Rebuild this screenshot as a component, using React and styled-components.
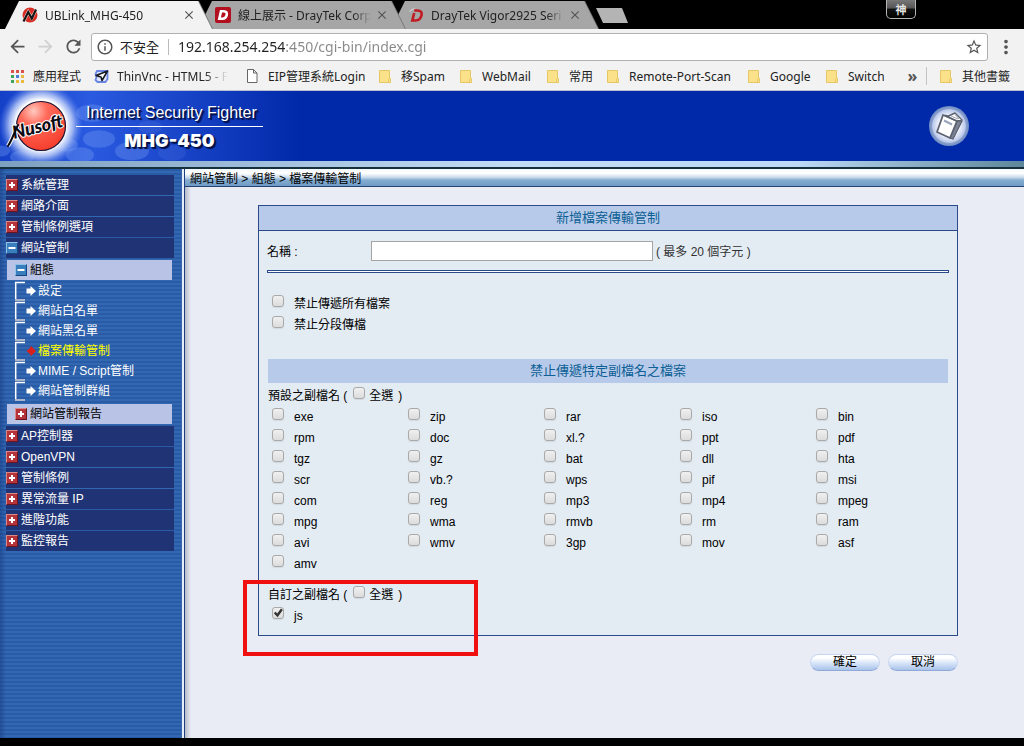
import React, { useState } from 'react';
import styled, { createGlobalStyle, css } from 'styled-components';
import {
  MdArrowBack,
  MdArrowForward,
  MdRefresh,
  MdStarBorder,
  MdMoreVert,
  MdInfoOutline,
  MdClose,
} from 'react-icons/md';

const uiFont = '"Noto Sans", "Noto Sans CJK TC", sans-serif';
const pageFont = '"Liberation Sans", "Noto Sans CJK TC", sans-serif';

const GlobalStyle = createGlobalStyle`
  *, *::before, *::after { box-sizing: border-box; }
  body { margin: 0; background: #000; font-family: ${pageFont}; font-size: 12px; }
  button, input { font: inherit; margin: 0; }
  a { color: inherit; text-decoration: none; }
  svg { display: block; flex: none; }
`;

const Screen = styled.div`
  display: flex;
  flex-direction: column;
  min-height: 100vh;
`;

/* ---------- Browser frame ---------- */

const TabStrip = styled.div`
  display: flex;
  align-items: flex-end;
  height: 29px;
  padding: 0 108px 0 5px;
  background: #000;
  font-family: ${uiFont};
`;

const TabSlot = styled.div`
  position: relative;
  z-index: ${(p) => p.$level};
  width: 207px;
  margin-right: -14px;
  filter: drop-shadow(1px 0 0 #777);
`;

const Tab = styled.div`
  display: flex;
  align-items: center;
  height: 28px;
  padding: 0 16px 0 17px;
  background: ${(p) => (p.$active ? '#f2f2f2' : '#a6a6a6')};
  clip-path: polygon(14px 0, calc(100% - 14px) 0, 100% 100%, 0 100%);
`;

const TabTitle = styled.span`
  flex: 1;
  min-width: 0;
  margin-left: 7px;
  overflow: hidden;
  white-space: nowrap;
  font-size: 12px;
  color: #222;
  mask-image: linear-gradient(90deg, #000 calc(100% - 18px), transparent);
`;

const PlainButton = styled.button`
  display: flex;
  align-items: center;
  justify-content: center;
  padding: 0;
  border: 0;
  background: none;
  color: ${(p) => p.$color || '#555'};
`;

const TabClose = styled(PlainButton)`
  width: 14px;
  margin-left: 4px;
`;

const NewTab = styled.button`
  width: 32px;
  height: 15px;
  margin: 0 0 6px 12px;
  padding: 0;
  border: 0;
  background: #b4b4b4;
  clip-path: polygon(0 0, 26px 0, 100% 100%, 7px 100%);
`;

const ImeBadge = styled.span`
  align-self: flex-start;
  width: 30px;
  height: 19px;
  margin-left: auto;
  border: 1px solid #b5b5b5;
  border-top: 0;
  border-radius: 0 0 5px 5px;
  background: linear-gradient(#777 0, #555 45%, #111 50%, #000);
  color: #e4e4e4;
  font-size: 11px;
  font-weight: 700;
  line-height: 19px;
  text-align: center;
`;

const Toolbar = styled.div`
  display: flex;
  align-items: center;
  gap: 7px;
  height: 35px;
  padding: 0 7px;
  background: #f2f2f2;
  font-family: ${uiFont};
`;

const Omnibox = styled.label`
  display: flex;
  flex: 1;
  align-items: center;
  height: 28px;
  padding: 0 4px;
  border: 1px solid #b0b0b0;
  border-radius: 3px;
  background: #fff;
  color: #222;
  font-size: 13px;
`;

const Security = styled.span`
  margin: 0 9px 0 6px;
  padding-right: 9px;
  border-right: 1px solid #bbb;
  line-height: 16px;
  white-space: nowrap;
`;

const Address = styled.input`
  flex: 1;
  min-width: 0;
  padding: 0;
  border: 0;
  outline: 0;
  background: linear-gradient(90deg, #222 107px, #888 107px);
  background-clip: text;
  -webkit-text-fill-color: transparent;
  font-size: 14px;
  line-height: 20px;
`;

const Bookmarks = styled.nav`
  display: flex;
  align-items: center;
  height: 27px;
  padding: 0 10px 2px;
  border-bottom: 1px solid #b8bfd0;
  background: #f2f2f2;
  font-family: ${uiFont};
  font-size: 12px;
  color: #222;
`;

const Bookmark = styled.a`
  display: flex;
  align-items: center;
  width: ${(p) => p.$width}px;
  padding-right: 12px;
  gap: 8px;
  white-space: nowrap;
  svg { width: 15px; height: 15px; }
`;

const BookmarkName = styled.span`
  overflow: hidden;
  ${(p) => p.$fade && css`mask-image: linear-gradient(90deg, #000 calc(100% - 24px), transparent);`}
`;

const OtherBookmarks = styled.div`
  display: flex;
  align-items: center;
  margin-left: auto;
  padding-left: 12px;
  border-left: 1px solid #c4c4c4;
`;

const More = styled(PlainButton)`
  margin-left: auto;
  font-size: 16px;
  font-weight: 700;
  line-height: 16px;
`;

/* ---------- Product header ---------- */

const Header = styled.header`
  position: relative;
  display: flex;
  align-items: center;
  justify-content: space-between;
  height: 70px;
  padding-right: 55px;
  background: #0029a9;
`;

const HeaderArt = styled.svg`
  width: 300px;
  height: 70px;
`;

const Brand = styled.div`
  position: absolute;
  top: 12px;
  left: 76px;
  width: 187px;
  color: #fff;
  text-shadow: 1px 1px 1px #001048, 2px 2px 1px #001048;
`;

const BrandLine = styled.div`
  padding: 0 0 3px 10px;
  border-bottom: 1px solid #fff;
  font-size: 16px;
  line-height: 20px;
  white-space: nowrap;
`;

const Model = styled.div`
  padding-top: 4px;
  text-align: center;
  font-family: Inter, sans-serif;
  font-size: 18px;
  font-weight: 900;
  line-height: 20px;
`;

const Ridge = styled.div`
  height: 8px;
  border-bottom: 2px solid #15303c;
  background: linear-gradient(90deg, #7d9fc0, #c3dcf5 50%, #bcd9f6 78%, #5c8699);
`;

const Body = styled.div`
  display: flex;
  flex: 1;
`;

/* ---------- Side menu ---------- */

const Side = styled.nav`
  flex: none;
  width: 185px;
  padding: 6px 8px 0 6px;
  border-right: 1px solid #1c3f80;
  background:
    linear-gradient(90deg, transparent 181px, #3a64a6 181px, #3a64a6 182px, #e6eefb 182px),
    linear-gradient(90deg, rgba(10, 40, 110, 0.35), transparent 6px),
    repeating-linear-gradient(#2a5ba6 0, #2a5ba6 2px, #3267b1 2px, #3267b1 4px);
  color: #fff;
`;

const MenuItem = styled.a`
  display: flex;
  align-items: center;
  gap: 3px;
  width: 168px;
  height: 20px;
  margin-bottom: 1px;
  background: #203475;
  line-height: 20px;
`;

const SubHead = styled(MenuItem)`
  width: 165px;
  margin: ${(p) => (p.$last ? '3px 0 2px 1px' : '2px 0 1px 1px')};
  padding-left: 8px;
  background: #b9c3e6;
  color: #000;
`;

const SubItem = styled.a`
  display: flex;
  align-items: center;
  gap: 2px;
  height: 20px;
  padding-left: 8px;
  color: ${(p) => (p.$active ? '#ffff00' : '#fff')};
  line-height: 20px;
`;

/* ---------- Page ---------- */

const Main = styled.main`
  flex: 1;
  min-width: 0;
  padding-bottom: 60px;
  background: linear-gradient(90deg, #b4b9c8, #e9ecf5 6px);
`;

const Crumbs = styled.div`
  height: 18px;
  padding-left: 5px;
  border-bottom: 1px solid #24426e;
  background: linear-gradient(#f4f8fc 0, #fff 25%, #c6d9ea 50%, #85acd0 65%, #6f9cc6);
  color: #000;
  line-height: 20px;
  white-space: nowrap;
`;

const Form = styled.form`
  margin: 18px 66px 0 73px;
`;

const Panel = styled.section`
  position: relative;
  padding-bottom: 8px;
  border: 1px solid #2a4a8c;
  background: #e3ebf3;
  color: #000;
`;

const PanelTitle = styled.h1`
  margin: 0;
  border-bottom: 1px solid #2a4a8c;
  background: #b8caea;
  color: #0b5f94;
  font-size: 13px;
  font-weight: 400;
  line-height: 24px;
  text-align: center;
`;

const NameRow = styled.div`
  display: flex;
  align-items: center;
  height: 39px;
  margin: 0 8px;
  color: #333;
`;

const NameLabel = styled.label`
  width: 104px;
  color: #000;
`;

const NameInput = styled.input`
  width: 282px;
  height: 20px;
  margin-right: 3px;
  padding: 0 4px;
  border: 1px solid #a4a4a4;
  background: #fff;
`;

const Rule = styled.hr`
  height: 3px;
  margin: 0 8px 21px;
  border: 1px solid #2a4a8c;
  background: #fff;
`;

const Check = styled.input.attrs({ type: 'checkbox' })`
  position: relative;
  flex: none;
  appearance: none;
  width: 12px;
  height: 12px;
  border: 1px solid #a9a9a9;
  border-radius: 3px;
  background: linear-gradient(#f0f0f0, #dcdcdc);
  box-shadow: 0 1px 1px rgba(0, 0, 0, 0.08);
  &:checked::after {
    content: '';
    position: absolute;
    inset: 0;
    background: #333;
    clip-path: polygon(8% 52%, 26% 38%, 42% 56%, 80% 6%, 98% 20%, 46% 92%);
  }
`;

const Option = styled.label`
  display: flex;
  align-items: flex-start;
  gap: 10px;
  height: 21px;
  padding: 1px 0 0 13px;
  line-height: 18px;
`;

const Band = styled.h2`
  margin: 23px 9px 3px;
  background: #b8caea;
  color: #0b5f94;
  font-size: 13px;
  font-weight: 400;
  line-height: 24px;
  text-align: center;
`;

const GroupHead = styled.div`
  display: flex;
  align-items: flex-start;
  height: 21px;
  padding-left: 9px;
  line-height: 20px;
`;

const SelectAll = styled.label`
  display: flex;
  gap: 4px;
  margin: 0 5px 0 6px;
  ${Check} { margin-top: 1px; }
`;

const Extensions = styled.div`
  display: grid;
  grid-template-columns: repeat(5, 1fr);
  padding-right: 18px;
  margin-bottom: 10px;
  ${Option} { line-height: 18px; }
`;

const Highlight = styled.div`
  position: absolute;
  top: 374px;
  left: -16px;
  width: 235px;
  height: 76px;
  border: 4px solid #f01010;
  pointer-events: none;
`;

const Actions = styled.div`
  display: flex;
  justify-content: flex-end;
  gap: 8px;
  margin-top: 18px;
`;

const Action = styled.button`
  width: 70px;
  height: 17px;
  padding: 0;
  border: 1px solid #c6d6ef;
  border-bottom-color: #8faad8;
  border-radius: 9px;
  background: linear-gradient(#fff 20%, #dbe8fa 50%, #a9c3ea);
  color: #000;
  line-height: 15px;
`;

const BottomBar = styled.div`
  height: 8px;
  background: #000;
`;

/* ---------- Drawings ---------- */

const NusoftFavicon = () => (
  <svg width="16" height="16" viewBox="0 0 16 16">
    <circle cx="8" cy="8" r="7.5" fill="#d92c22" />
    <path d="M2 13.500 6.200 5l3.600 6L14 3" fill="none" stroke="#f6d5d0" strokeWidth="3.200" />
    <path d="M1.500 14.500 6.200 5l3.600 6.500L14 2.500" fill="none" stroke="#151515" strokeWidth="2.200" />
  </svg>
);

const DraytekFavicon = ({ boxed }) => (
  <svg width="16" height="16" viewBox="0 0 16 16">
    {boxed && <rect width="16" height="16" rx="2" fill="#b3101f" />}
    <path
      d={boxed ? 'M6 4.200h2.800c2.600 0 3.400 1.400 2.900 3.900-.5 2.600-1.800 3.700-4.200 3.700H4.300z' : 'M6.200 3.500h3c3.600 0 5 1.600 4.300 4.800-.8 3.600-2.800 5.200-6 5.200H4.300L6.200 6'}
      fill="none"
      stroke={boxed ? '#fff' : '#c01a22'}
      strokeWidth="2.600"
    />
    {!boxed && <path d="M1 5.500C2 2.600 5 1 8 1.600 5.500 2 3.500 3 1 5.500z" fill="#e9e3e3" />}
  </svg>
);

const AppsIcon = () => (
  <svg viewBox="0 0 15 15">
    {['#d9534a', '#d9534a', '#d9534a', '#3fa35a', '#4a7fd6', '#e8b93c', '#3fa35a', '#e8b93c', '#e8b93c'].map((c, i) => (
      <rect key={i} x={1 + (i % 3) * 5} y={1 + Math.floor(i / 3) * 5} width="3" height="3" fill={c} />
    ))}
  </svg>
);

const ThinVncIcon = () => (
  <svg viewBox="0 0 15 15">
    <path d="M4 2h9.500v8l-2 3H3.500l-2-2 1-3-1-3 1.500-3z" fill="#dfe5fb" stroke="#6a86e4" strokeWidth="1.800" />
    <path d="M2 6.500 13.500 2 8 11.500 7 8z" fill="#fff" stroke="#16181f" strokeWidth="1.500" strokeLinejoin="round" />
  </svg>
);

const FileIcon = () => (
  <svg viewBox="0 0 15 15">
    <path d="M2.500.5h6l3.500 3.500v9.500H2.500zM8.500.5V4H12" fill="#fff" stroke="#666" />
  </svg>
);

const FolderIcon = () => (
  <svg viewBox="0 0 15 15">
    <path d="M1.500 1.500h10v8h1v4h-11z" fill="#fbe28a" stroke="#e5c765" />
    <path d="M10.500 13v-3" stroke="#e5c765" />
  </svg>
);

const ToggleIcon = ({ open }) => (
  <svg width="12" height="12" viewBox="0 0 12 12">
    <rect width="12" height="12" fill={open ? '#17467f' : '#6b1420'} />
    <path d="M0 12V0h12l-1.500 1.500h-9v9z" fill={open ? '#8fc0e6' : '#d98a88'} />
    <rect x="1" y="1" width="10" height="10" fill={open ? '#3a7fbd' : '#b5343a'} />
    <path d={open ? 'M2.500 6h7' : 'M3 6h6M6 3v6'} stroke="#fff" strokeWidth="2" />
  </svg>
);

const BranchArrow = ({ active }) => (
  <svg width="22" height="20" viewBox="0 0 22 20">
    <path d="M11 1.500H1.700v17" fill="none" stroke="#fff" strokeWidth="1.500" />
    <path d="M1 19H11" stroke="#a9b6cc" strokeWidth="2" />
    <path
      d={active ? 'M12.500 10l3-2.500 1.500-2.500 5 5-5 5-1.500-2.500z' : 'M12.500 7.500h4V5l5.500 5-5.500 5v-2.500h-4z'}
      fill={active ? '#d8201c' : '#fff'}
    />
  </svg>
);

const BookIcon = () => (
  <svg width="40" height="40" viewBox="0 0 40 40">
    <defs>
      <radialGradient id="disc">
        <stop offset="0.500" stopColor="#f4f6fd" />
        <stop offset="0.820" stopColor="#b9c8ea" />
        <stop offset="0.860" stopColor="#8ba0cc" />
        <stop offset="1" stopColor="#6f8cc4" />
      </radialGradient>
    </defs>
    <circle cx="20" cy="20" r="20" fill="url(#disc)" />
    <path d="M28 15 33 15 24 33 21 32z" fill="#7c8496" stroke="#5c6270" strokeWidth="1.200" />
    <path d="M14 9 28 15 21 32 8 26z" fill="#fff" stroke="#5c6270" strokeWidth="1.800" strokeLinejoin="round" />
    <path d="M16 9.500 19.500 10 26 7 33 14 28 15z" fill="#fff" stroke="#5c6270" strokeWidth="1.400" strokeLinejoin="round" />
    <path d="M22 10 29 13M26 8.500 30 13" stroke="#8a91a2" strokeWidth="0.800" />
    <path d="M15 14.500 23 18.500" stroke="#9aa3bb" strokeWidth="2" />
  </svg>
);

const bubbles = [
  [99, 48, 16], [80, 64, 14], [132, 60, 17], [92, 22, 16], [22, 66, 12], [172, 62, 14], [66, 54, 12], [0, 60, 10], [150, 36, 12],
];

const Art = () => (
  <HeaderArt viewBox="0 0 300 70">
    <defs>
      <linearGradient id="sky">
        <stop offset="0" stopColor="#1440c8" />
        <stop offset="0.300" stopColor="#2a5ae0" />
        <stop offset="0.550" stopColor="#1c48cc" />
        <stop offset="1" stopColor="#0029a9" />
      </linearGradient>
      <radialGradient id="halo">
        <stop offset="0.600" stopColor="#fff" />
        <stop offset="0.760" stopColor="#bccdf8" stopOpacity="0.800" />
        <stop offset="1" stopColor="#5c86ee" stopOpacity="0" />
      </radialGradient>
      <radialGradient id="ball" cx="0.350" cy="0.200" r="0.800">
        <stop offset="0" stopColor="#ffc9bf" />
        <stop offset="0.350" stopColor="#ff6a5a" />
        <stop offset="1" stopColor="#f6402f" />
      </radialGradient>
    </defs>
    <rect width="300" height="70" fill="url(#sky)" />
    {bubbles.map(([x, y, r], i) => (
      <ellipse key={i} cx={x} cy={y} rx={r} ry={r * 0.550} fill="#86a8fa" opacity={x > 145 ? 0.120 : 0.300} />
    ))}
    <circle cx="41" cy="34" r="42" fill="url(#halo)" />
    <circle cx="41" cy="35" r="24.500" fill="url(#ball)" stroke="#1b1030" strokeWidth="1.200" />
    <path d="M8 55C12 49 14 42 18 34" fill="none" stroke="#fff" strokeWidth="4" />
    <text
      x="14" y="48" transform="rotate(-14 14 48)"
      fontFamily="Lato, sans-serif" fontStyle="italic" fontWeight="900" fontSize="18"
      fill="#0a0a14" stroke="#fff" strokeWidth="2" paintOrder="stroke"
    >
      Nusoft
    </text>
    <path d="M8 55C12 49 14 42 18 34" fill="none" stroke="#0a0a14" strokeWidth="2" strokeLinecap="round" />
  </HeaderArt>
);

/* ---------- Data ---------- */

const tabs = [
  { title: 'UBLink_MHG-450', icon: <NusoftFavicon />, active: true },
  { title: '線上展示 - DrayTek Corp', icon: <DraytekFavicon boxed /> },
  { title: 'DrayTek Vigor2925 Seri', icon: <DraytekFavicon /> },
];

const bookmarks = [
  ['應用程式', 84, AppsIcon],
  ['ThinVnc - HTML5 - F', 151, ThinVncIcon],
  ['EIP管理系統Login', 133, FileIcon],
  ['移Spam', 81, FolderIcon],
  ['WebMail', 87, FolderIcon],
  ['常用', 60, FolderIcon],
  ['Remote-Port-Scan', 141, FolderIcon],
  ['Google', 78, FolderIcon],
  ['Switch', 74, FolderIcon],
];

const menuTop = ['系統管理', '網路介面', '管制條例選項'];
const subMenu = ['設定', '網站白名單', '網站黑名單', '檔案傳輸管制', 'MIME / Script管制', '網站管制群組'];
const menuBottom = ['AP控制器', 'OpenVPN', '管制條例', '異常流量 IP', '進階功能', '監控報告'];

const extensions = (
  'exe zip rar iso bin rpm doc xl.? ppt pdf tgz gz bat dll hta scr vb.? wps pif msi ' +
  'com reg mp3 mp4 mpeg mpg wma rmvb rm ram avi wmv 3gp mov asf amv'
).split(' ');

export default function App() {
  const [name, setName] = useState('');
  const [url, setUrl] = useState('192.168.254.254:450/cgi-bin/index.cgi');

  return (
    <Screen>
      <GlobalStyle />
      <TabStrip>
        {tabs.map((t, i) => (
          <TabSlot key={t.title} $level={3 - i}>
            <Tab $active={t.active}>
              {t.icon}
              <TabTitle>{t.title}</TabTitle>
              <TabClose type="button" aria-label="關閉"><MdClose size={14} /></TabClose>
            </Tab>
          </TabSlot>
        ))}
        <NewTab type="button" aria-label="新分頁" />
        <ImeBadge>神</ImeBadge>
      </TabStrip>

      <Toolbar>
        <PlainButton type="button" aria-label="上一頁"><MdArrowBack size={21} /></PlainButton>
        <PlainButton type="button" aria-label="下一頁" $color="#d0d0d0"><MdArrowForward size={21} /></PlainButton>
        <PlainButton type="button" aria-label="重新載入"><MdRefresh size={21} /></PlainButton>
        <Omnibox>
          <MdInfoOutline size={18} color="#555" />
          <Security>不安全</Security>
          <Address aria-label="網址" value={url} onChange={(e) => setUrl(e.target.value)} />
          <MdStarBorder size={18} color="#555" />
        </Omnibox>
        <PlainButton type="button" aria-label="選單"><MdMoreVert size={22} /></PlainButton>
      </Toolbar>

      <Bookmarks>
        {bookmarks.map(([label, width, Icon], i) => (
          <Bookmark key={label} href="#" $width={width}>
            <Icon />
            <BookmarkName $fade={i === 1}>{label}</BookmarkName>
          </Bookmark>
        ))}
        <More type="button">»</More>
        <OtherBookmarks>
          <Bookmark href="#" $width={75}>
            <FolderIcon />
            <span>其他書籤</span>
          </Bookmark>
        </OtherBookmarks>
      </Bookmarks>

      <Header>
        <Art />
        <Brand>
          <BrandLine>Internet Security Fighter</BrandLine>
          <Model>MHG-450</Model>
        </Brand>
        <PlainButton type="button" aria-label="說明"><BookIcon /></PlainButton>
      </Header>
      <Ridge />

      <Body>
        <Side>
          {menuTop.map((m) => (
            <MenuItem key={m} href="#"><ToggleIcon />{m}</MenuItem>
          ))}
          <MenuItem href="#"><ToggleIcon open />網站管制</MenuItem>
          <SubHead href="#"><ToggleIcon open />組態</SubHead>
          {subMenu.map((m, i) => (
            <SubItem key={m} href="#" $active={i === 3}>
              <BranchArrow active={i === 3} />{m}
            </SubItem>
          ))}
          <SubHead href="#" $last><ToggleIcon />網站管制報告</SubHead>
          {menuBottom.map((m) => (
            <MenuItem key={m} href="#"><ToggleIcon />{m}</MenuItem>
          ))}
        </Side>

        <Main>
          <Crumbs>網站管制 &gt; 組態 &gt; 檔案傳輸管制</Crumbs>
          <Form onSubmit={(e) => e.preventDefault()}>
            <Panel>
              <PanelTitle>新增檔案傳輸管制</PanelTitle>
              <NameRow>
                <NameLabel htmlFor="rule-name">名稱 :</NameLabel>
                <NameInput id="rule-name" type="text" maxLength={20} value={name} onChange={(e) => setName(e.target.value)} />
                <span>( 最多 20 個字元 )</span>
              </NameRow>
              <Rule />
              <Option><Check />禁止傳遞所有檔案</Option>
              <Option><Check />禁止分段傳檔</Option>

              <Band>禁止傳遞特定副檔名之檔案</Band>
              <GroupHead>預設之副檔名 ( <SelectAll><Check />全選</SelectAll> )</GroupHead>
              <Extensions>
                {extensions.map((x) => (
                  <Option key={x}><Check />{x}</Option>
                ))}
              </Extensions>
              <GroupHead>自訂之副檔名 ( <SelectAll><Check />全選</SelectAll> )</GroupHead>
              <Option><Check defaultChecked />js</Option>
              <Highlight />
            </Panel>
            <Actions>
              <Action type="submit">確定</Action>
              <Action type="button">取消</Action>
            </Actions>
          </Form>
        </Main>
      </Body>
      <BottomBar />
    </Screen>
  );
}
